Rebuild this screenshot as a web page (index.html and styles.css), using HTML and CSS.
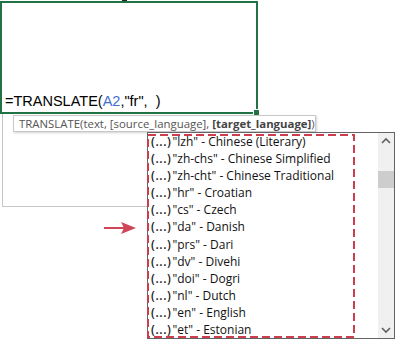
FILE: index.html
```html
<!DOCTYPE html>
<html lang="en">
<head>
    <meta charset="UTF-8">
    <title>TRANSLATE autocomplete</title>
    <link rel="stylesheet" href="styles.css">
</head>
<body>
    <div class="sheet">
        <span class="top-mark"></span>
        <div class="cell">
            <div class="formula">=TRANSLATE(<span class="ref">A2</span>,"fr",&nbsp;&nbsp;)</div>
            <span class="handle"></span>
        </div>
        <div class="edit-area"></div>

        <div class="tooltip">TRANSLATE(text, [source_language], <b>[target_language]</b>)</div>

        <svg class="pointer" width="40" height="16" viewBox="0 0 40 16">
            <line x1="0" y1="8" x2="24" y2="8" stroke="#cf4658" stroke-width="2"/>
            <polygon points="17,2 32,8 17,14 20,8" fill="#cf4658"/>
        </svg>

        <div class="dropdown">
            <ul class="options">
                <li><span class="arg">(...)</span>"lzh" - Chinese (Literary)</li>
                <li><span class="arg">(...)</span>"zh-chs" - Chinese Simplified</li>
                <li><span class="arg">(...)</span>"zh-cht" - Chinese Traditional</li>
                <li><span class="arg">(...)</span>"hr" - Croatian</li>
                <li><span class="arg">(...)</span>"cs" - Czech</li>
                <li><span class="arg">(...)</span>"da" - Danish</li>
                <li><span class="arg">(...)</span>"prs" - Dari</li>
                <li><span class="arg">(...)</span>"dv" - Divehi</li>
                <li><span class="arg">(...)</span>"doi" - Dogri</li>
                <li><span class="arg">(...)</span>"nl" - Dutch</li>
                <li><span class="arg">(...)</span>"en" - English</li>
                <li><span class="arg">(...)</span>"et" - Estonian</li>
            </ul>
            <div class="scrollbar">
                <svg class="chev" width="16" height="10" viewBox="0 0 16 10">
                    <polyline points="4,7 8,3 12,7" fill="none" stroke="#606060" stroke-width="1.6"/>
                </svg>
                <div class="thumb"></div>
                <div class="track"></div>
                <svg class="chev" width="16" height="10" viewBox="0 0 16 10">
                    <polyline points="4,3 8,7 12,3" fill="none" stroke="#606060" stroke-width="1.6"/>
                </svg>
            </div>
            <svg class="highlight" width="208" height="205" viewBox="0 0 208 205">
                <rect x="1" y="1" width="206" height="202" fill="none" stroke="#cc3d4e" stroke-width="2" stroke-dasharray="8 4"/>
            </svg>
        </div>
    </div>
</body>
</html>
```

FILE: styles.css
```css
body {
    margin: 0;
    background-color: #fff;
    font-family: "Open Sans", "Noto Sans", sans-serif;
    overflow: hidden;
}
.sheet {
    position: relative;
    width: 397px;
    height: 342px;
    padding-top: 1px;
    box-sizing: border-box;
}
.top-mark {
    position: absolute;
    left: 122px;
    top: 0;
    width: 5px;
    height: 2px;
    background-color: #222;
}
.cell {
    position: relative;
    width: 258px;
    height: 113px;
    border: 2px solid #217346;
    box-sizing: border-box;
    display: flex;
    align-items: flex-end;
    padding: 0 0 2px 3px;
}
.formula {
    font-family: "Liberation Sans", Arial, sans-serif;
    font-size: 14.5px;
    line-height: 18px;
    color: #000;
    white-space: nowrap;
}
.ref {
    color: #3f6fd0;
}
.handle {
    position: absolute;
    right: -4px;
    bottom: -4px;
    width: 5px;
    height: 5px;
    background-color: #217346;
    border: 1px solid #fff;
}
.edit-area {
    margin-left: 2px;
    width: 146px;
    height: 92px;
    border-left: 1px solid #c6c6c6;
    border-bottom: 1px solid #c6c6c6;
}
/* FUNCTION TOOLTIP */
.tooltip {
    position: absolute;
    left: 13px;
    top: 115px;
    width: 303px;
    height: 17px;
    box-sizing: border-box;
    padding-left: 5px;
    border: 1px solid #c8c8c8;
    background-color: #fff;
    box-shadow: 1px 1px 2px rgba(0,0,0,0.18);
    font-size: 11.4px;
    line-height: 15px;
    color: #555;
    white-space: nowrap;
}
.tooltip b {
    color: #444;
}
.pointer {
    position: absolute;
    left: 104px;
    top: 220px;
}
/* AUTOCOMPLETE LIST */
.dropdown {
    position: absolute;
    left: 147px;
    top: 132px;
    width: 248px;
    height: 207px;
    box-sizing: border-box;
    border: 1px solid #646464;
    background-color: #fff;
    display: flex;
}
.options {
    list-style: none;
    margin: 0;
    padding: 0 0 0 3px;
    flex-grow: 1;
    font-size: 12px;
    line-height: 17.1px;
    color: #111;
}
.options li {
    white-space: nowrap;
}
.arg {
    margin-right: 1px;
    letter-spacing: 0.6px;
    font-weight: 600;
    color: #222;
}
.scrollbar {
    width: 16px;
    background-color: #f0f0f0;
    display: flex;
    flex-direction: column;
    align-items: center;
}
.chev {
    margin-top: 3px;
    margin-bottom: 3px;
}
.thumb {
    margin-top: 22px;
    width: 16px;
    height: 17px;
    background-color: #cdcdcd;
}
.track {
    flex-grow: 1;
}
.highlight {
    position: absolute;
    left: -1px;
    top: 1px;
}
```
